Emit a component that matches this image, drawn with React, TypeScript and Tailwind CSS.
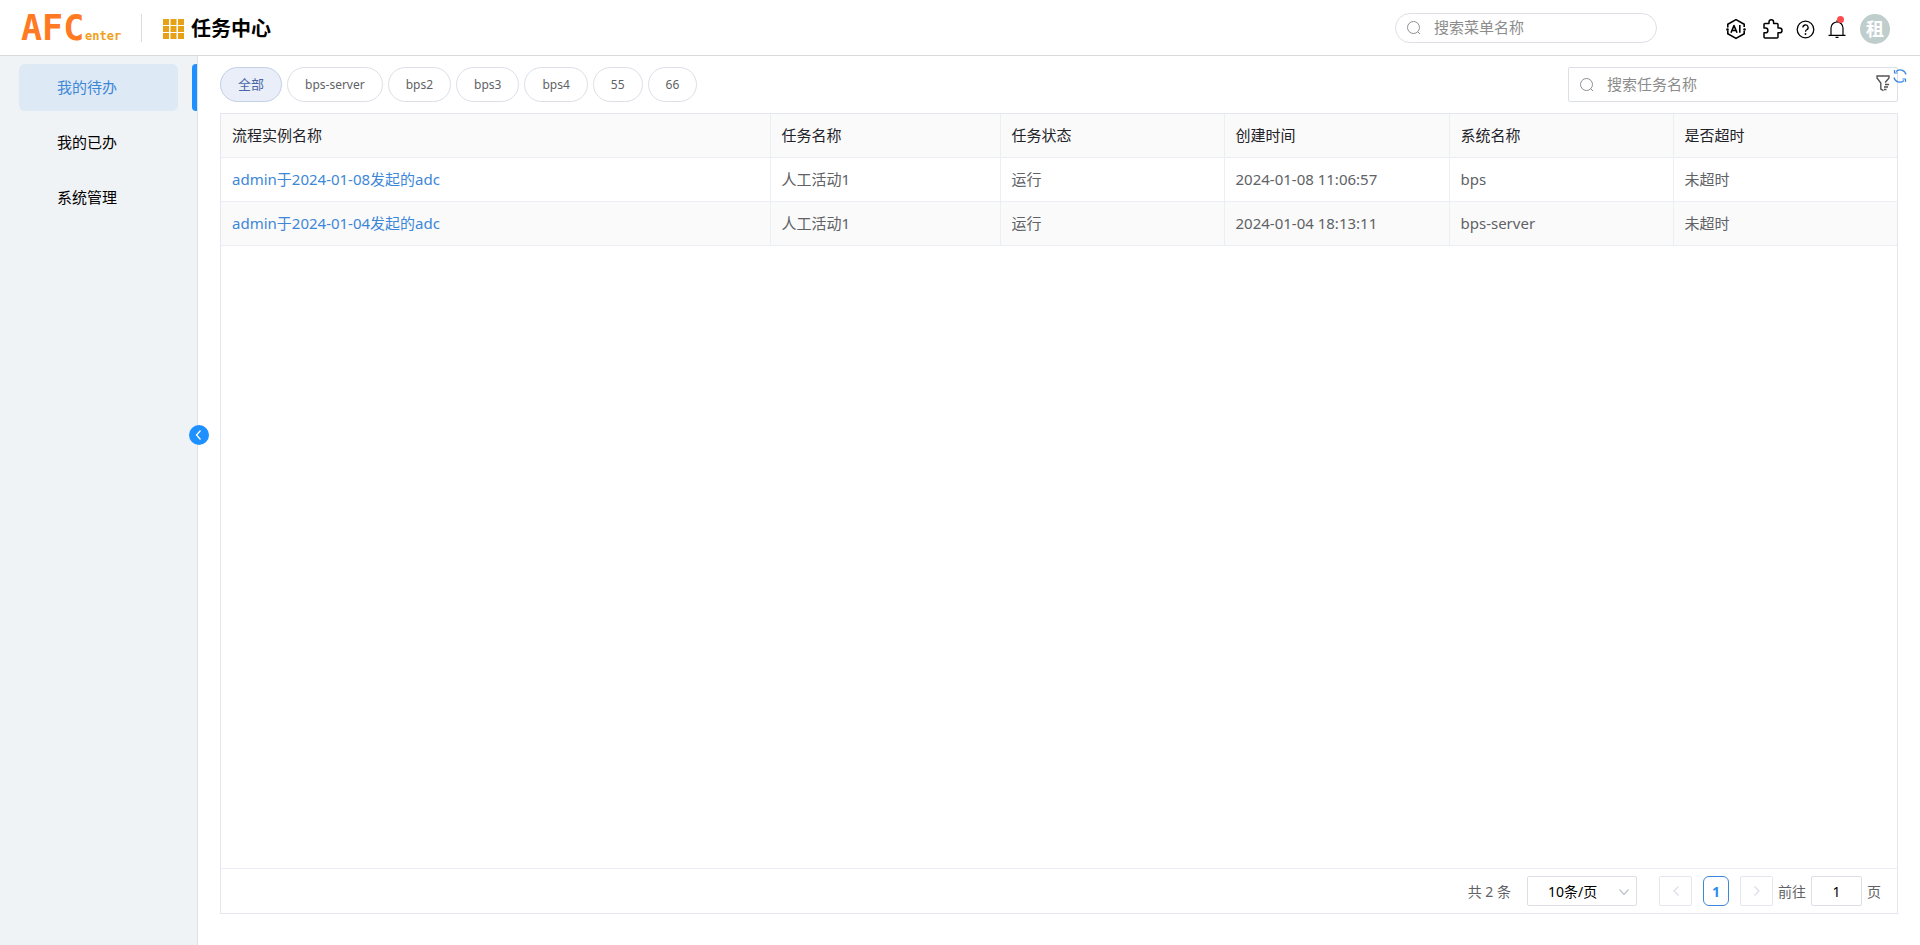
import { useState } from 'react';

const MENU = ['我的待办', '我的已办', '系统管理'];
const FILTERS = ['全部', 'bps-server', 'bps2', 'bps3', 'bps4', '55', '66'];
const COLUMNS = ['流程实例名称', '任务名称', '任务状态', '创建时间', '系统名称', '是否超时'];

const TASKS = [
  { title: 'admin于2024-01-08发起的adc', name: '人工活动1', status: '运行', created: '2024-01-08 11:06:57', system: 'bps', overdue: '未超时' },
  { title: 'admin于2024-01-04发起的adc', name: '人工活动1', status: '运行', created: '2024-01-04 18:13:11', system: 'bps-server', overdue: '未超时' },
];

function Logo() {
  return (
    <svg width="104" height="48" viewBox="0 0 104 48" role="img" aria-label="AFCenter">
      <text x="1" y="36" fontSize="35" fontWeight="700" fill="#ff7a22" fontFamily="'DejaVu Sans Mono', monospace">AFC</text>
      <text x="65" y="36" fontSize="12" fontWeight="700" fill="#f0a020" fontFamily="'DejaVu Sans Mono', monospace">enter</text>
    </svg>
  );
}

function SearchIcon() {
  return (
    <svg width="16" height="16" viewBox="0 0 16 16" fill="none" stroke="#8c8f94" strokeWidth="1">
      <circle cx="7.5" cy="7.5" r="6" />
      <path d="M11.8 11.8 14 14" />
    </svg>
  );
}

function GridIcon() {
  return (
    <svg width="21" height="20" viewBox="0 0 21 20" fill="#e6a117">
      {[0, 7, 14].map((y) =>
        [0, 7.5, 15].map((x) => <rect key={`${x}-${y}`} x={x} y={y} width="6" height="6" />)
      )}
    </svg>
  );
}

function AiIcon() {
  return (
    <svg width="20" height="22" viewBox="0 0 20 22" fill="none" stroke="#000" strokeWidth="1.6" strokeLinejoin="round">
      <path d="M1.8 9.5V6.3L10 1.6l8.2 4.7V9" />
      <path d="M1.8 12.5v3.2l8.2 4.7 8.2-4.7V13" />
      <circle cx="1.5" cy="11.5" r="1.3" fill="#000" stroke="none" />
      <circle cx="18.5" cy="11.5" r="1.3" fill="#000" stroke="none" />
      <path d="M5 14.7 8 7.5l3 7.2M6 12.5h4M13.8 7v7.7" />
    </svg>
  );
}

function PuzzleIcon() {
  return (
    <svg width="22" height="22" viewBox="0 0 22 22" fill="none" stroke="#000" strokeWidth="1.5" strokeLinejoin="round">
      <path d="M3 5.5h4V4a2.3 2.3 0 0 1 4.6 0v1.5H15a1 1 0 0 1 1 1V10h1.6a2.4 2.4 0 0 1 0 4.8H16V19a1 1 0 0 1-1 1H3a1 1 0 0 1-1-1v-4.2h1.5a2.4 2.4 0 0 0 0-4.8H2V6.5a1 1 0 0 1 1-1z" />
    </svg>
  );
}

function HelpIcon() {
  return (
    <svg width="19" height="19" viewBox="0 0 19 19" fill="none" stroke="#000" strokeWidth="1.3">
      <circle cx="9.5" cy="9.5" r="8.3" />
      <path d="M6.9 7.6a2.6 2.6 0 1 1 3.9 2.2c-.9.5-1.3.9-1.3 1.9" />
      <circle cx="9.5" cy="14" r=".9" fill="#000" stroke="none" />
    </svg>
  );
}

function BellIcon() {
  return (
    <svg width="18" height="18" viewBox="0 0 18 18" fill="none" stroke="#000" strokeWidth="1.2">
      <path d="M.5 15.3h17M3 15.3V8a6 6 0 0 1 12 0v7.3M9 2V.3M7.5 17.3h3" />
    </svg>
  );
}

function FilterIcon() {
  return (
    <svg width="14" height="17" viewBox="0 0 14 17" fill="none" stroke="#555" strokeWidth="1.4">
      <path d="M7.5 15.7 4.8 14V8L1 3V1h12v2L9.2 7.5M9 9.5h4M8 12h4M8 14.5h2.5" />
    </svg>
  );
}

function RefreshIcon() {
  return (
    <svg width="14" height="14" viewBox="0 0 14 14" fill="none" stroke="#3d87e0" strokeWidth="1.2">
      <path d="M1 8.5A6 6 0 0 0 11 11.5M13 5.5A6 6 0 0 0 3 2.5M1.5 1v3h3M12.5 13v-3h-3" />
    </svg>
  );
}

function Chevron({ d, color }: { d: string; color: string }) {
  return (
    <svg width="12" height="12" viewBox="0 0 12 12" fill="none" stroke={color} strokeWidth="1.3">
      <path d={d} />
    </svg>
  );
}

function Header() {
  return (
    <header className="flex h-14 shrink-0 items-center border-b border-[#d9d9d9] bg-white pr-[30px] pl-5">
      <Logo />
      <div className="ml-[17px] h-7 w-px bg-[#dcdcdc]" />
      <div className="ml-[21px] flex items-center gap-[7px] pt-0.5">
        <GridIcon />
        <h1 className="text-[20px] leading-7 font-bold text-black">任务中心</h1>
      </div>

      <label className="mr-[69px] ml-auto flex h-[30px] w-[262px] items-center gap-3 rounded-full border border-[#dcdfe6] px-[10px]">
        <SearchIcon />
        <input aria-label="搜索菜单名称" placeholder="搜索菜单名称" className="min-w-0 flex-1 text-[15px] outline-none placeholder:text-[#8c8c8c]" />
      </label>
      <div className="flex items-center pt-[3px]">
        <button aria-label="AI"><AiIcon /></button>
        <button aria-label="插件" className="ml-4"><PuzzleIcon /></button>
        <button aria-label="帮助" className="ml-3"><HelpIcon /></button>
        <button aria-label="通知" className="relative ml-[13px]">
          <BellIcon />
          <span className="absolute -top-1 right-0.5 size-[7px] rounded-full bg-[#ff4d4f]" />
        </button>
        <button className="ml-[14px] flex size-[30px] items-center justify-center rounded-full bg-[#bfcdcd] text-[18px] font-bold text-white">租</button>
      </div>
    </header>
  );
}

function Sidebar({ active, onSelect }: { active: string; onSelect: (item: string) => void }) {
  return (
    <aside className="relative w-[198px] shrink-0 border-r border-[#dfe1e4] bg-[#f0f3f5] pt-2">
      <nav className="flex flex-col gap-2">
        {MENU.map((item) => (
          <div key={item} className="flex h-[47px] justify-between pl-[19px]">
            <button
              onClick={() => onSelect(item)}
              className={`w-[159px] rounded-md pl-[38px] text-left text-[15px] ${active === item ? 'bg-[#dde9f5] text-[#3d87d8]' : 'text-black'}`}
            >
              {item}
            </button>
            {active === item && <span className="w-[5px] rounded-l-sm bg-[#1e90ff]" />}
          </div>
        ))}
      </nav>
      <button aria-label="收起菜单" className="absolute top-[369px] -right-3 flex size-5 items-center justify-center rounded-full bg-[#1e90ff]">
        <Chevron d="M7.5 1.5 3.5 6l4 4.5" color="#fff" />
      </button>
    </aside>
  );
}

function Pagination() {
  return (
    <footer className="flex h-[45px] items-center justify-end border-t border-[#ebeef5] pr-4 text-[14px] text-[#606266]">
      <span>共 2 条</span>
      <div className="relative ml-4">
        <select aria-label="每页条数" className="h-[30px] w-[110px] appearance-none rounded-xs border border-[#dcdfe6] bg-white pl-5 text-[14px] text-black">
          <option>10条/页</option>
        </select>
        <span className="pointer-events-none absolute top-[10px] right-[7px]">
          <Chevron d="M1.5 3.5 6 8.5l4.5-5" color="#c0c4cc" />
        </span>
      </div>
      <button aria-label="上一页" disabled className="ml-[22px] flex h-[30px] w-[33px] items-center justify-center rounded-xs border border-[#e4e7ed]">
        <Chevron d="M8.5 1.5 4 6l4.5 4.5" color="#dcdfe6" />
      </button>
      <button className="ml-[11px] h-[30px] w-[26px] rounded-md border border-[#3d87d8] font-bold text-[#2d8cf0]">1</button>
      <button aria-label="下一页" disabled className="ml-[11px] flex h-[30px] w-[33px] items-center justify-center rounded-xs border border-[#e4e7ed]">
        <Chevron d="M3.5 1.5 8 6l-4.5 4.5" color="#dcdfe6" />
      </button>
      <label className="ml-[5px] flex items-center gap-[5px]">
        前往
        <input defaultValue="1" className="h-[30px] w-[51px] rounded-xs border border-[#dcdfe6] text-center text-black" />
        页
      </label>
    </footer>
  );
}

function TaskTable() {
  return (
    <table className="w-full table-fixed border-collapse text-left text-[15px]">
      <colgroup>
        <col />
        <col className="w-[230px]" />
        <col className="w-[224px]" />
        <col className="w-[225px]" />
        <col className="w-[224px]" />
        <col className="w-[224px]" />
      </colgroup>
      <thead>
        <tr className="h-[43px] border-b border-[#ebeef5] bg-[#fafafa] text-[#1f2329]">
          {COLUMNS.map((column) => (
            <th key={column} className="border-r border-[#ebeef5] px-[11px] font-normal last:border-r-0">{column}</th>
          ))}
        </tr>
      </thead>
      <tbody className="text-[#606266]">
        {TASKS.map((task) => (
          <tr key={task.title} className="h-11 border-b border-[#ebeef5] even:bg-[#fafafa]">
            <td className="border-r border-[#ebeef5] px-[11px]">
              <a href="#" className="text-[#3d87d8]">{task.title}</a>
            </td>
            <td className="border-r border-[#ebeef5] px-[11px]">{task.name}</td>
            <td className="border-r border-[#ebeef5] px-[11px]">{task.status}</td>
            <td className="border-r border-[#ebeef5] px-[11px]">{task.created}</td>
            <td className="border-r border-[#ebeef5] px-[11px]">{task.system}</td>
            <td className="px-[11px]">{task.overdue}</td>
          </tr>
        ))}
      </tbody>
    </table>
  );
}

export default function App() {
  const [menu, setMenu] = useState(MENU[0]);
  const [filter, setFilter] = useState(FILTERS[0]);

  return (
    <div className="flex h-screen flex-col bg-white font-['Noto_Sans','Noto_Sans_CJK_SC',sans-serif]">
      <Header />
      <div className="flex min-h-0 flex-1">
        <Sidebar active={menu} onSelect={setMenu} />
        <main className="flex min-w-0 flex-1 flex-col pt-[11px] pr-[22px] pb-[31px] pl-[22px]">
          <div className="flex items-center justify-between">
            <div className="flex gap-[5px]">
              {FILTERS.map((item) => (
                <button
                  key={item}
                  onClick={() => setFilter(item)}
                  className={`h-[35px] rounded-full border px-[17px] text-[12px] first:text-[13px] ${filter === item ? 'border-[#c3cfe6] bg-[#eaeef8] text-[#4a67a8]' : 'border-[#dcdfe6] text-[#606266]'}`}
                >
                  {item}
                </button>
              ))}
            </div>
            <div className="relative">
              <label className="flex h-[35px] w-[330px] items-center gap-3 rounded-xs border border-[#dcdfe6] px-[10px]">
                <SearchIcon />
                <input aria-label="搜索任务名称" placeholder="搜索任务名称" className="min-w-0 flex-1 text-[15px] outline-none placeholder:text-[#8c8c8c]" />
              </label>
              <button aria-label="筛选" className="absolute top-2 right-2"><FilterIcon /></button>
              <button aria-label="刷新" className="absolute top-[2px] -right-[9px]"><RefreshIcon /></button>
            </div>
          </div>

          <section className="mt-[11px] flex min-h-0 flex-1 flex-col border border-[#e4e7ed]">
            <div className="min-h-0 flex-1">
              <TaskTable />
            </div>
            <Pagination />
          </section>
        </main>
      </div>
    </div>
  );
}
